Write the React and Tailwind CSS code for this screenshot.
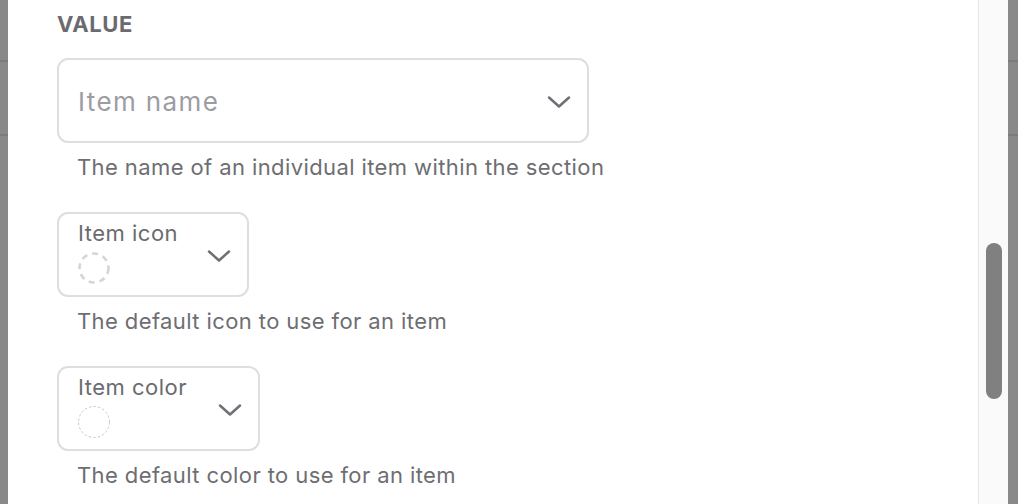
function Chevron() {
  return (
    <svg viewBox="0 0 24 12" className="w-[24px] h-[12px] text-[#6f6f76] mt-[3px]" fill="none" stroke="currentColor" strokeWidth="2.5" strokeLinecap="round" strokeLinejoin="round">
      <path d="M2 1.5l10 9 10-9" />
    </svg>
  );
}

function SideStrip() {
  return (
    <div className="w-full h-full bg-[#898989] flex flex-col">
      <div className="h-[60px]" />
      <div className="h-[2px] bg-[#7b7b7b]" />
      <div className="h-[72px]" />
      <div className="h-[2px] bg-[#7b7b7b]" />
    </div>
  );
}

function Helper({ children }) {
  return (
    <p className="mt-[10px] pl-[20px] text-[22px] leading-[28px] tracking-[0.4px] text-[#6e6e72]">{children}</p>
  );
}

function IconSelect({ label, width, thin }) {
  return (
    <div className={`mt-[31px] ${width} h-[85px] border-2 border-[#dedede] rounded-[11px] flex items-center justify-between pl-[19px] pr-[16px]`}>
      <div className="flex flex-col self-start pt-[5px]">
        <span className="text-[22px] leading-[28px] tracking-[0.5px] text-[#6b6b6f]">{label}</span>
        <svg viewBox="0 0 34 34" className="w-[34px] h-[34px] mt-[4px] -ml-[1px]">
          {thin ? (
            <circle cx="17" cy="17" r="15.5" fill="none" stroke="#c8c8ce" strokeWidth="1" strokeDasharray="2.5 2" />
          ) : (
            <circle cx="17" cy="17" r="14.5" fill="none" stroke="#d4d4da" strokeWidth="2.6" strokeDasharray="6 5" />
          )}
        </svg>
      </div>
      <Chevron />
    </div>
  );
}

export default function App() {
  return (
    <div className="w-[1018px] h-[504px] flex overflow-hidden bg-white" style={{ fontFamily: 'Inter, "Noto Sans", sans-serif' }}>
      <div className="w-[8px] shrink-0"><SideStrip /></div>

      <div className="flex-1 bg-white pl-[49px] pt-[10px]">
        <div className="text-[22px] leading-[28px] font-bold text-[#6b6b6f] tracking-[0.6px]">VALUE</div>

        <div className="mt-[20px] w-[532px] h-[85px] border-2 border-[#dedede] rounded-[11px] flex items-center justify-between pl-[19px] pr-[16px]">
          <span className="text-[26px] tracking-[1.4px] text-[#9c9ca3] mt-[2px]">Item name</span>
          <Chevron />
        </div>
        <Helper>The name of an individual item within the section</Helper>

        <IconSelect label="Item icon" width="w-[192px]" />
        <Helper>The default icon to use for an item</Helper>

        <IconSelect label="Item color" width="w-[203px]" thin />
        <Helper>The default color to use for an item</Helper>
      </div>

      <div className="w-[30px] shrink-0 bg-[#fafafa] border-l border-[#e6e6e6] pt-[243px] pl-[7px]">
        <div className="w-[16px] h-[156px] rounded-full bg-[#808080]" />
      </div>
      <div className="w-[10px] shrink-0"><SideStrip /></div>
    </div>
  );
}
